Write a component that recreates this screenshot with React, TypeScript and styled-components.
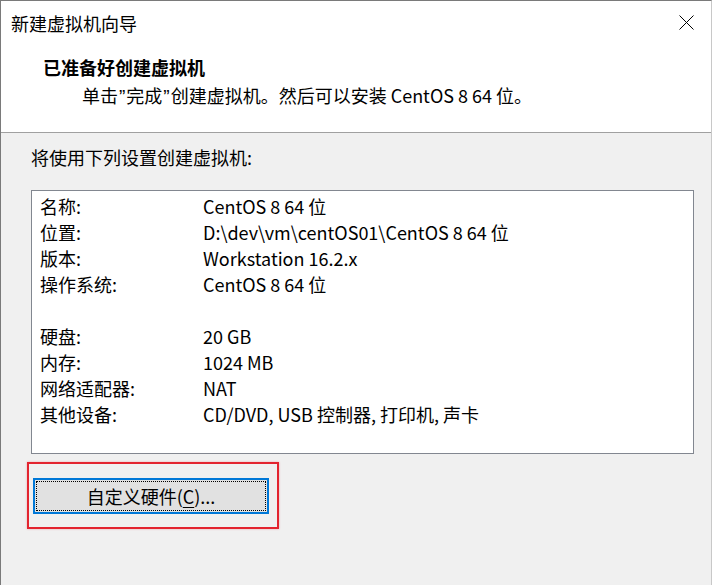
import styled, { createGlobalStyle } from "styled-components";

const GlobalStyle = createGlobalStyle`
  html, body {
    margin: 0;
    padding: 0;
    background: #ffffff;
  }
  body {
    font-family: "Microsoft YaHei", "Noto Sans CJK SC", sans-serif;
    color: #000;
  }
`;

const Window = styled.div`
  width: 712px;
  height: 585px;
  box-sizing: border-box;
  border-left: 1px solid #7a7a7a;
  border-top: 1px solid #7a7a7a;
  border-right: 1px solid #c8c8c8;
  display: flex;
  flex-direction: column;
  overflow: hidden;
`;

const TitleBar = styled.div`
  height: 43px;
  display: flex;
  align-items: center;
  justify-content: space-between;
  padding: 0 17px 0 10px;
  background: #ffffff;
`;

const TitleText = styled.span`
  font-size: 18px;
  line-height: 26px;
`;

const CloseButton = styled.div`
  width: 16px;
  height: 16px;
  display: flex;
  align-items: center;
  justify-content: center;
`;

const Header = styled.header`
  background: #ffffff;
  height: 89px;
  border-bottom: 1px solid #a0a0a0;
  padding: 10px 0 0 42px;
  box-sizing: border-box;
`;

const HeaderTitle = styled.div`
  font-size: 18px;
  font-weight: bold;
  line-height: 26px;
`;

const HeaderSub = styled.div`
  font-size: 18px;
  line-height: 26px;
  padding-left: 39px;
  margin-top: 2px;
`;

// the dialog draws these quotes narrow, like a Latin font does
const Quote = styled.span`
  font-family: "Liberation Sans", sans-serif;
  font-size: 19px;
  padding: 0 1px;
`;

const Body = styled.main`
  flex: 1;
  background: #f0f0f0;
  padding: 11px 0 0 30px;
`;

const Intro = styled.div`
  font-size: 18px;
  line-height: 26px;
`;

const ListBox = styled.div`
  margin-top: 20px;
  width: 663px;
  height: 264px;
  box-sizing: border-box;
  background: #ffffff;
  border: 1px solid #828790;
  padding: 2px 0 0 8px;
`;

const Row = styled.div`
  display: flex;
  height: 26px;
  align-items: center;
  font-size: 18px;
  line-height: 26px;
`;

const Label = styled.span`
  width: 163px;
  flex-shrink: 0;
`;

const Value = styled.span`
  white-space: nowrap;
`;

const Highlight = styled.div`
  margin: 8px 0 0 -4px;
  width: 252px;
  box-sizing: border-box;
  border: 2px solid #e3242f;
  box-shadow: 0 0 2px rgba(227, 36, 47, 0.35);
  padding: 14px 0 13px 4px;
`;

const HardwareButton = styled.button`
  position: relative;
  width: 236px;
  height: 36px;
  box-sizing: border-box;
  background: #e1e1e1;
  border: 2px solid #0078d7;
  font-family: inherit;
  font-size: 18px;
  line-height: 26px;
  color: #000;
  padding: 0;
  display: flex;
  align-items: center;
  justify-content: center;

  &::after {
    content: "";
    position: absolute;
    inset: 1px;
    border: 1px dotted #000;
  }

  u {
    text-underline-offset: 3px;
  }
`;

type Setting = { label: string; value: string } | null;

const settings: Setting[] = [
  { label: "名称:", value: "CentOS 8 64 位" },
  { label: "位置:", value: "D:\\dev\\vm\\centOS01\\CentOS 8 64 位" },
  { label: "版本:", value: "Workstation 16.2.x" },
  { label: "操作系统:", value: "CentOS 8 64 位" },
  null,
  { label: "硬盘:", value: "20 GB" },
  { label: "内存:", value: "1024 MB" },
  { label: "网络适配器:", value: "NAT" },
  { label: "其他设备:", value: "CD/DVD, USB 控制器, 打印机, 声卡" },
];

const App = () => {
  return (
    <>
      <GlobalStyle />
      <Window>
        <TitleBar>
          <TitleText>新建虚拟机向导</TitleText>
          <CloseButton>
            <svg width="15" height="15" viewBox="0 0 15 15">
              <path d="M0.5 0.5 L14.5 14.5 M14.5 0.5 L0.5 14.5" stroke="#000" strokeWidth="1" fill="none" />
            </svg>
          </CloseButton>
        </TitleBar>
        <Header>
          <HeaderTitle>已准备好创建虚拟机</HeaderTitle>
          <HeaderSub>
            单击<Quote>”</Quote>完成<Quote>”</Quote>创建虚拟机。然后可以安装 CentOS 8 64 位。
          </HeaderSub>
        </Header>
        <Body>
          <Intro>将使用下列设置创建虚拟机:</Intro>
          <ListBox>
            {settings.map((s, i) =>
              s ? (
                <Row key={i}>
                  <Label>{s.label}</Label>
                  <Value>{s.value}</Value>
                </Row>
              ) : (
                <Row key={i} />
              )
            )}
          </ListBox>
          <Highlight>
            <HardwareButton>
              自定义硬件(<u>C</u>)...
            </HardwareButton>
          </Highlight>
        </Body>
      </Window>
    </>
  );
};

export default App;
